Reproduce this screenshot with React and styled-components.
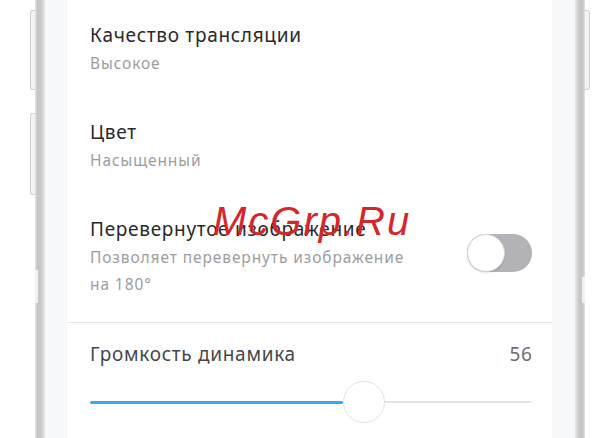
import React from 'react';
import styled, { createGlobalStyle } from 'styled-components';

const settings = [
  { title: 'Качество трансляции', value: 'Высокое' },
  { title: 'Цвет', value: 'Насыщенный' },
];

const volume = { label: 'Громкость динамика', value: 56, fill: 57.4 };

export default function App() {
  return (
    <>
      <GlobalStyle />
      <Stage>
        <Gutter />
        <SideKeys>
          <Key side="left" h={80} />
          <Key side="left" h={82} />
        </SideKeys>
        <Band>
          <Notch top={270} h={33} />
        </Band>
        <Bezel />
        <Screen>
          <List>
            {settings.map(item => (
              <Item key={item.title}>
                <Title>{item.title}</Title>
                <Sub>{item.value}</Sub>
              </Item>
            ))}
            <ToggleItem>
              <Item>
                <Title>Перевернутое изображение</Title>
                <Sub>Позволяет перевернуть изображение<br />на 180°</Sub>
              </Item>
              <Toggle>
                <Knob />
              </Toggle>
            </ToggleItem>
          </List>
          <Divider />
          <VolumeHead>
            <Title muted>{volume.label}</Title>
            <Value>{volume.value}</Value>
          </VolumeHead>
          <Slider>
            <Fill style={{ width: `${volume.fill}%` }} />
            <Thumb />
            <Rest />
          </Slider>
        </Screen>
        <Bezel />
        <Band right>
          <Notch right top={277} h={26} />
        </Band>
        <SideKeys>
          <Key side="right" h={80} />
        </SideKeys>
        <Gutter />
        <Watermark>McGrp.Ru</Watermark>
      </Stage>
    </>
  );
}

const GlobalStyle = createGlobalStyle`
  body {
    margin: 0;
    background: #ffffff;
    overflow: hidden;
  }
`;

const Stage = styled.div`
  position: relative;
  display: flex;
  width: 613px;
  height: 438px;
  overflow: hidden;
  background: #ffffff;
  font-family: "Noto Sans", "DejaVu Sans", sans-serif;
`;

const Gutter = styled.div`
  flex: 1;
  min-width: 23px;
  max-width: 30px;
  &:first-child {
    flex: 0 0 30px;
  }
`;

const SideKeys = styled.div`
  display: flex;
  flex-direction: column;
  gap: 23px;
  width: 5px;
  padding-top: 10px;
`;

const Key = styled.div`
  height: ${p => p.h}px;
  background: #f3f3f3;
  border: 1px solid #cfcfcf;
  box-sizing: border-box;
  ${p => p.side === 'left'
    ? 'border-right: none; border-radius: 3px 0 0 3px;'
    : 'border-left: none; border-radius: 0 3px 3px 0;'}
`;

const Band = styled.div`
  display: flex;
  flex-direction: column;
  align-items: ${p => (p.right ? 'flex-end' : 'flex-start')};
  width: 10px;
  background: linear-gradient(
    ${p => (p.right ? '270deg' : '90deg')},
    #e4e4e4 0%,
    #c5c5c5 25%,
    #c9c9c9 60%,
    #e9e9e9 100%
  );
`;

const Notch = styled.div`
  width: 3px;
  height: ${p => p.h}px;
  margin-top: ${p => p.top}px;
  background: #f2f2f2;
`;

const Bezel = styled.div`
  width: 23px;
  background: #f6f8fa;
`;

const Screen = styled.div`
  width: 484px;
  display: flex;
  flex-direction: column;
  background: #ffffff;
`;

const List = styled.div`
  display: flex;
  flex-direction: column;
  gap: 43px;
  padding: 23px 20px 0 22px;
`;

const Item = styled.div`
  display: flex;
  flex-direction: column;
  gap: 3px;
`;

const ToggleItem = styled.div`
  display: flex;
  justify-content: space-between;
  align-items: flex-start;
`;

const Title = styled.div`
  font-size: 19px;
  line-height: 24px;
  letter-spacing: 0.7px;
  color: ${p => (p.muted ? '#47474b' : '#29292b')};
`;

const Sub = styled.div`
  font-size: 15.5px;
  line-height: 27px;
  letter-spacing: 0.9px;
  color: #9d9da0;
`;

const Toggle = styled.div`
  display: flex;
  width: 65px;
  height: 38px;
  margin-top: 17px;
  border-radius: 19px;
  background: #b3b3b7;
`;

const Knob = styled.div`
  width: 38px;
  height: 38px;
  box-sizing: border-box;
  border-radius: 50%;
  background: #ffffff;
  border: 1px solid #d6d6d8;
  box-shadow: 0 1px 2px rgba(0, 0, 0, 0.12);
`;

const Divider = styled.div`
  height: 1px;
  margin-top: 24px;
  background: #e6e6e8;
`;

const VolumeHead = styled.div`
  display: flex;
  justify-content: space-between;
  padding: 19px 20px 0 22px;
`;

const Value = styled.div`
  font-size: 19px;
  line-height: 24px;
  letter-spacing: 0.7px;
  margin-right: -0.7px;
  color: #6e6e72;
`;

const Slider = styled.div`
  display: flex;
  align-items: center;
  height: 42px;
  margin: 15px 21px 0 22px;
`;

const Fill = styled.div`
  height: 3px;
  background: #33abef;
  border-radius: 2px;
`;

const Thumb = styled.div`
  flex: 0 0 42px;
  height: 42px;
  box-sizing: border-box;
  border-radius: 50%;
  background: #ffffff;
  border: 1px solid #e2e2e4;
`;

const Rest = styled.div`
  flex: 1;
  height: 2px;
  background: #e4e4e6;
`;

const Watermark = styled.div`
  position: absolute;
  left: 213px;
  top: 201px;
  font-family: "Liberation Sans", Arial, sans-serif;
  font-style: italic;
  font-size: 40px;
  line-height: 40px;
  letter-spacing: 2px;
  color: #d6262b;
`;
